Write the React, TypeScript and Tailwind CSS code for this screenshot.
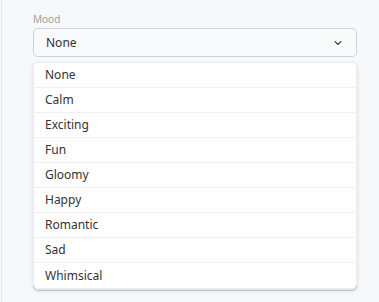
import { ChevronDown } from 'lucide-react';

const moods = ['None', 'Calm', 'Exciting', 'Fun', 'Gloomy', 'Happy', 'Romantic', 'Sad', 'Whimsical'];

export default function App() {
  return (
    <div className="w-[379px] h-[302px] bg-[#f7f8fa] overflow-hidden font-['Noto_Sans',sans-serif]">
      <div className="h-full ml-[1px] border-l border-[#e6e8ec] pl-[31px] pr-[22px] pt-[13px]">
        <div className="relative">
          <label className="block text-[10px] leading-[13px] text-[#9a9ea6]">Mood</label>
          <div className="mt-[2px] h-[29px] rounded-[5px] border border-[#c9d3e0] bg-[#f9fafc] flex items-center justify-between pl-[12px] pr-[12px]">
            <span className="text-[12px] text-[#333]">None</span>
            <ChevronDown className="w-[12px] h-[12px] text-[#444]" strokeWidth={2.2} />
          </div>

          {/* field behind the open menu */}
          <div className="mt-[10px] h-[224px] rounded-[5px] border border-[#c9d3e0] bg-[#f9fafc]" />

          <ul className="absolute left-0 right-0 top-[49px] bg-white rounded-[5px] border border-[#eceef2] shadow-[0_2px_4px_rgba(0,0,0,0.12)] overflow-hidden">
            {moods.map((m, i) => (
              <li
                key={m}
                className={`h-[25px] flex items-center pl-[11px] text-[12px] text-[#333] ${i < moods.length - 1 ? 'border-b border-[#eef0f3]' : ''}`}
              >
                {m}
              </li>
            ))}
          </ul>
        </div>
      </div>
    </div>
  );
}
